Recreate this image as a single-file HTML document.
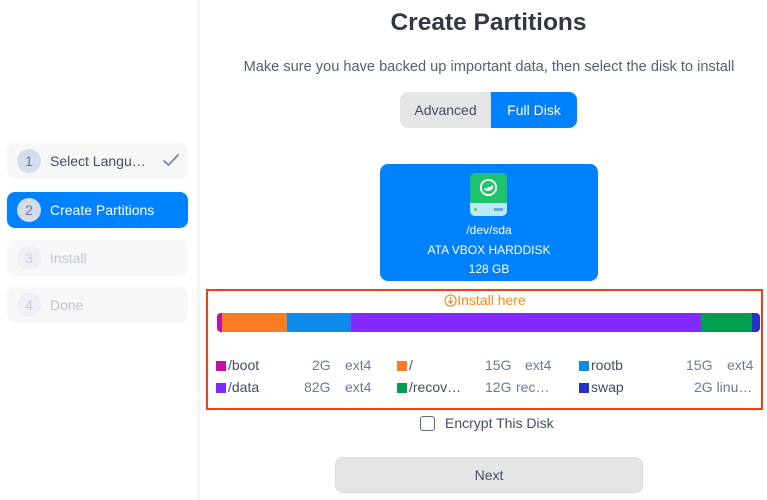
<!DOCTYPE html>
<html><head><meta charset="utf-8"><style>
*{margin:0;padding:0;box-sizing:border-box}
body{width:767px;height:500px;background:#fff;font-family:"Liberation Sans",sans-serif;position:relative;overflow:hidden;color:#414d68}
.sep{position:absolute;left:197px;top:0;width:3px;height:500px;background:#f5f5f5}
.step{position:absolute;left:7px;width:181px;height:36px;border-radius:8px;background:#f7f7f7;font-size:14px;display:flex;align-items:center}
.num{width:24px;height:24px;border-radius:50%;background:#d5dcea;color:#6b7a99;font-size:14px;display:flex;align-items:center;justify-content:center;margin-left:10px;margin-right:9px}
.abs{position:absolute}
.leg{position:absolute;font-size:14px;color:#414d68}
.sq{display:inline-block;width:10px;height:10px;vertical-align:-1px;margin-right:2px}
.g{color:#6b7a99}
</style></head><body>
<div class="sep"></div>
<div class="step" style="top:143px;color:#414d68"><div class="num">1</div>Select Langu…<svg class="abs" style="left:155px;top:10px" width="18" height="14" viewBox="0 0 18 14"><path d="M1.5 7.5 L6.5 12 L16.5 1.5" fill="none" stroke="#7585a8" stroke-width="1.8"/></svg></div>
<div class="step" style="top:192px;background:#0081ff;color:#fff"><div class="num">2</div>Create Partitions</div>
<div class="step" style="top:240px;color:#c0c6d4"><div class="num" style="background:#eef0f5;color:#c8cedb">3</div>Install</div>
<div class="step" style="top:287px;color:#c0c6d4"><div class="num" style="background:#eef0f5;color:#c8cedb">4</div>Done</div>

<div class="abs" style="left:200px;width:577px;top:9px;text-align:center;font-size:24.5px;font-weight:bold;color:#303846">Create Partitions</div>
<div class="abs" style="left:200px;width:778px;top:59px;text-align:center;font-size:14.6px;color:#526078;left:100px">Make sure you have backed up important data, then select the disk to install</div>
<div class="abs" style="left:400px;top:92px;width:177px;height:36px;border-radius:8px;background:#e5e5e5;overflow:hidden;font-size:14px">
<div class="abs" style="left:0;width:91px;top:0;height:36px;line-height:36px;text-align:center;color:#414d68">Advanced</div>
<div class="abs" style="left:91px;width:86px;top:0;height:36px;line-height:36px;text-align:center;background:#0081ff;color:#fff">Full Disk</div></div>

<div class="abs" style="left:380px;top:164px;width:218px;height:117px;border-radius:8px;background:#0081ff;color:#fff;text-align:center;font-size:12px">
<div class="abs" style="left:90px;top:9px;width:37px;height:43px;border-radius:5px;background:#1fc36e;overflow:hidden">
<div class="abs" style="left:0;top:30px;width:37px;height:13px;background:#bfe8f5"></div>
<div class="abs" style="left:4px;top:35px;width:3px;height:3px;border-radius:50%;background:#4fd14f"></div>
<div class="abs" style="left:24px;top:35px;width:9px;height:3px;background:#6aaae0"></div>
<svg class="abs" style="left:9px;top:5px" width="19" height="19" viewBox="0 0 20 20"><circle cx="10" cy="10" r="8" fill="none" stroke="#fff" stroke-width="2"/><path d="M6 11 a4.5 4.5 0 0 0 8 -3 a3 3 0 0 1 -5 2" fill="none" stroke="#fff" stroke-width="2"/></svg></div>
<div class="abs" style="left:0;width:218px;top:59px">/dev/sda</div>
<div class="abs" style="left:0;width:218px;top:79px">ATA VBOX HARDDISK</div>
<div class="abs" style="left:0;width:218px;top:98px">128 GB</div></div>

<div class="abs" style="left:206px;top:289px;width:557px;height:121px;border:2px solid #ff3a12"></div>
<div class="abs" style="left:205px;width:560px;top:292px;text-align:center;font-size:14px;color:#ff8719"><svg width="13" height="13" viewBox="0 0 14 14" style="vertical-align:-2px"><circle cx="7" cy="7" r="6" fill="none" stroke="#ff8719" stroke-width="1.2"/><path d="M7 3.5 V10 M4.5 7.5 L7 10 L9.5 7.5" fill="none" stroke="#ff8719" stroke-width="1.2"/></svg>Install here</div>
<div class="abs" style="left:217px;top:313px;width:543px;height:19px;border-radius:4px;overflow:hidden;display:flex">
<div style="width:5px;background:#c011a8"></div><div style="width:65px;background:#fb7c22"></div><div style="width:64px;background:#0c8beb"></div><div style="width:350px;background:#8429ff"></div><div style="width:51px;background:#00a050"></div><div style="width:8px;background:#2532c6"></div></div>

<div class="leg" style="left:216px;top:357px"><span class="sq" style="background:#c011a8"></span>/boot</div>
<div class="leg g" style="left:312px;top:357px">2G</div><div class="leg g" style="left:345px;top:357px">ext4</div>
<div class="leg" style="left:397px;top:357px"><span class="sq" style="background:#fb7c22"></span>/</div>
<div class="leg g" style="left:485px;top:357px">15G</div><div class="leg g" style="left:525px;top:357px">ext4</div>
<div class="leg" style="left:579px;top:357px"><span class="sq" style="background:#0c8beb"></span>rootb</div>
<div class="leg g" style="left:686px;top:357px">15G</div><div class="leg g" style="left:727px;top:357px">ext4</div>
<div class="leg" style="left:216px;top:379px"><span class="sq" style="background:#8429ff"></span>/data</div>
<div class="leg g" style="left:304px;top:379px">82G</div><div class="leg g" style="left:345px;top:379px">ext4</div>
<div class="leg" style="left:397px;top:379px"><span class="sq" style="background:#00a050"></span>/recov…</div>
<div class="leg g" style="left:485px;top:379px">12G</div><div class="leg g" style="left:516px;top:379px">rec…</div>
<div class="leg" style="left:579px;top:379px"><span class="sq" style="background:#2532c6"></span>swap</div>
<div class="leg g" style="left:694px;top:379px">2G linu…</div>

<div class="abs" style="left:420px;top:416px;width:15px;height:15px;border:1.5px solid #5a6785;border-radius:3px"></div>
<div class="abs" style="left:445px;top:415px;font-size:14px;color:#414d68">Encrypt This Disk</div>
<div class="abs" style="left:335px;top:457px;width:308px;height:36px;border-radius:8px;background:#e5e5e5;border:1px solid #dcdcdc;text-align:center;line-height:34px;font-size:14px;color:#414d68">Next</div>
</body></html>
